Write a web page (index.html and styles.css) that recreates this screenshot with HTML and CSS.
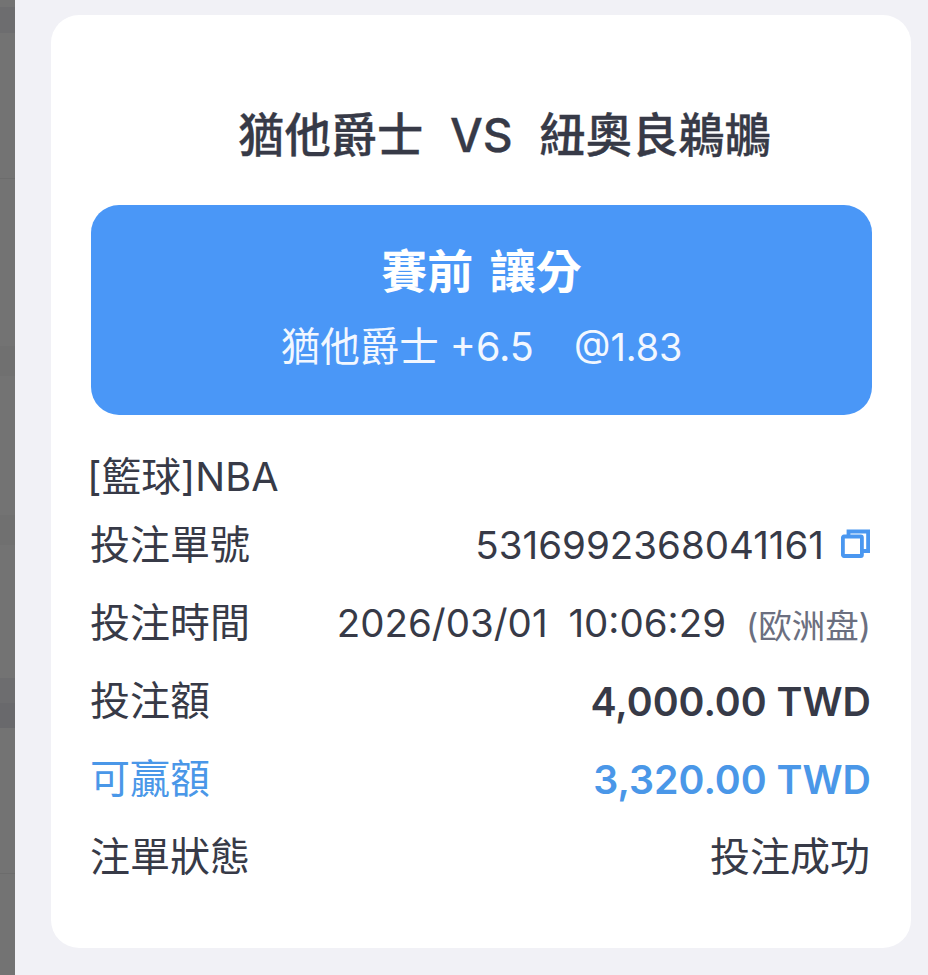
FILE: index.html
```html
<!DOCTYPE html>
<html>
<head>
    <title>注單詳情</title>
    <link rel="stylesheet" href="styles.css">
</head>
<body>
    <div class="page">
        <div class="side-strip">
            <div class="band gap-7"></div>
            <div class="band band-dark h-26"></div>
            <div class="band gap-145"></div>
            <div class="band band-line"></div>
            <div class="band gap-167"></div>
            <div class="band band-soft h-30"></div>
            <div class="band gap-139"></div>
            <div class="band band-soft h-30"></div>
            <div class="band gap-133"></div>
            <div class="band band-dark h-25"></div>
            <div class="band band-darker h-25"></div>
            <div class="band gap-145"></div>
            <div class="band band-line"></div>
        </div>
        <div class="sheet">
            <div class="card">
                <h1 class="match-title">猶他爵士&nbsp; VS &nbsp;紐奧良鵜鶘</h1>
                <div class="bet-box">
                    <div class="bet-type">賽前 讓分</div>
                    <div class="bet-pick">猶他爵士 +6.5 <span class="bet-odds">@1.83</span></div>
                </div>
                <div class="league">[籃球]NBA</div>
                <div class="row">
                    <span class="row-label">投注單號</span>
                    <span class="row-value">5316992368041161
                        <svg class="copy-icon" width="29" height="29" viewBox="0 0 29 29" fill="none" stroke="#4a97f0" stroke-width="3.8">
                            <rect x="1.9" y="7.5" width="19" height="19.5" rx="1"/>
                            <path d="M7.5 7V2.5h19.6V22h-6.5"/>
                        </svg>
                    </span>
                </div>
                <div class="row">
                    <span class="row-label">投注時間</span>
                    <span class="row-value time-value">2026/03/01 10:06:29<span class="row-note">(欧洲盘)</span></span>
                </div>
                <div class="row">
                    <span class="row-label">投注額</span>
                    <span class="row-value strong">4,000.00 TWD</span>
                </div>
                <div class="row win">
                    <span class="row-label">可贏額</span>
                    <span class="row-value strong">3,320.00 TWD</span>
                </div>
                <div class="row">
                    <span class="row-label">注單狀態</span>
                    <span class="row-label status">投注成功</span>
                </div>
            </div>
        </div>
    </div>
</body>
</html>
```

FILE: styles.css
```css
html, body {
    margin: 0;
    padding: 0;
}
body {
    font-family: "Inter", "Noto Sans CJK TC", sans-serif;
    color: #373a47;
    background-color: #f1f1f6;
}
.page {
    display: flex;
    width: 928px;
    height: 975px;
    overflow: hidden;
}
.side-strip {
    width: 15px;
    flex-shrink: 0;
    display: flex;
    flex-direction: column;
    background-color: #737373;
}
.band-dark {
    background-color: #6d6d6f;
}
.band-darker {
    background-color: #69696c;
}
.band-soft {
    background-color: #707070;
}
.band-line {
    height: 1px;
    background-color: #6c6c6c;
}
.gap-7 { height: 7px; }
.gap-133 { height: 133px; }
.gap-139 { height: 139px; }
.gap-145 { height: 145px; }
.gap-167 { height: 167px; }
.h-25 { height: 25px; }
.h-26 { height: 26px; }
.h-30 { height: 30px; }
.sheet {
    flex: 1;
    padding: 15px 17px 27px 36px;
}
.card {
    height: 100%;
    box-sizing: border-box;
    background-color: #ffffff;
    border-radius: 28px;
    padding: 91px 39px 0 40px;
}
.match-title {
    margin: 0 0 41px;
    padding-left: 46px;
    height: 58px;
    line-height: 58px;
    font-size: 46.3px;
    font-weight: 500;
    -webkit-text-stroke: 0.3px #373a47;
    word-spacing: 1px;
    text-align: center;
    white-space: nowrap;
}
.bet-box {
    height: 210px;
    box-sizing: border-box;
    padding-top: 37px;
    background-color: #4a97f7;
    border-radius: 28px;
    color: #ffffff;
    text-align: center;
}
.bet-type {
    font-size: 46px;
    line-height: 58px;
    font-weight: 600;
    word-spacing: 5px;
}
.bet-pick {
    font-size: 39.5px;
    line-height: 50px;
    margin-top: 22px;
    color: #f2f7ff;
}
.bet-odds {
    margin-left: 29px;
    font-size: 37.7px;
}
.league {
    margin: 37px 0 1px -4px;
    font-size: 39.7px;
    line-height: 50px;
}
.row {
    display: flex;
    justify-content: space-between;
    align-items: center;
    height: 78px;
    padding-right: 1px;
    font-size: 38.5px;
}
.row-label {
    margin-left: -1px;
    font-size: 40px;
}
.status {
    margin-right: 1px;
}
.row-value {
    display: flex;
    align-items: center;
    white-space: nowrap;
    padding-top: 6px;
}
.time-value {
    word-spacing: 10px;
}
.copy-icon {
    margin: -4px 1px 0 17px;
}
.row-note {
    margin-left: 20px;
    font-size: 33.5px;
    color: #6b6f80;
}
.strong {
    font-size: 39.3px;
    font-weight: 600;
}
.win {
    color: #4a97e8;
}
```
